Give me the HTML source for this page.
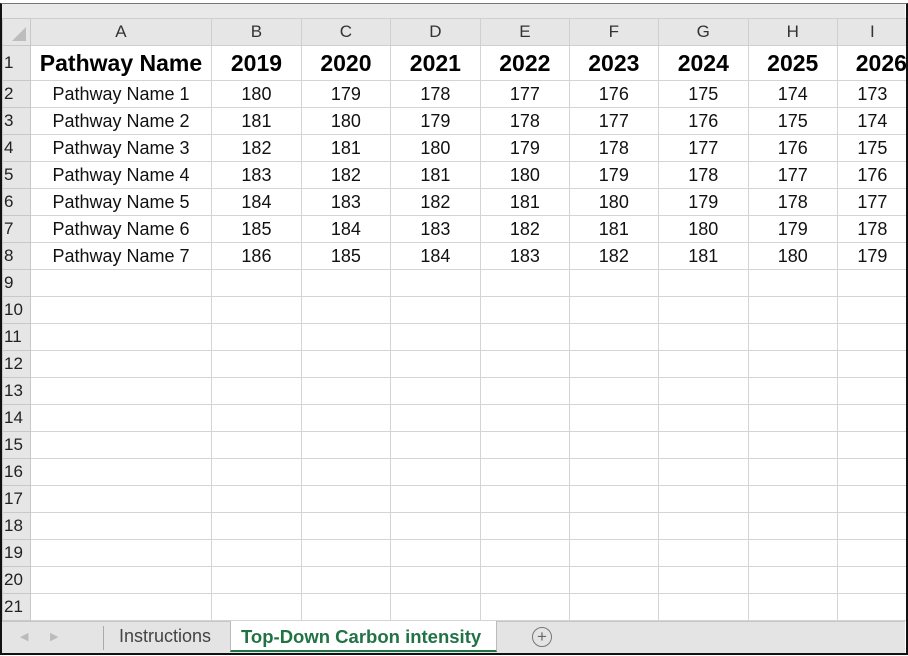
<!DOCTYPE html>
<html><head><style>
body{margin:0;width:908px;height:656px;overflow:hidden;background:#fff;font-family:"Liberation Sans",sans-serif;position:relative}
.frame{position:absolute;left:0;top:3px;width:904px;height:649px;border:2px solid #111;border-top:1px solid #777;box-sizing:content-box}
.top{position:absolute;left:2px;top:4px;width:903px;height:14px;background:#e9e9e9}
table{position:absolute;left:2px;top:18px;border-collapse:collapse;table-layout:fixed}
td{border:1px solid #d4d4d4;padding:0;text-align:center;font-size:18px;color:#111;white-space:nowrap;overflow:hidden;height:26px}
tr.h td{background:#e6e6e6;height:26px;font-size:17px;color:#333;border-color:#cfcfcf}
tr.r1 td{height:34px;font-weight:bold;font-size:23px;color:#000}
tr td.rh{background:#e6e6e6;text-align:left;padding-left:1px;font-size:17px;color:#222;font-weight:normal;border-color:#c8c8c8}
.tabs{position:absolute;left:2px;top:621px;width:903px;height:31px;background:#e4e4e4;border-top:1px solid #c6c6c6}
</style></head><body>
<div class="top"></div>
<table>
<colgroup><col style="width:28px"><col style="width:181px"><col style="width:90px"><col style="width:89px"><col style="width:90px"><col style="width:89px"><col style="width:89px"><col style="width:90px"><col style="width:89px"><col style="width:70px"></colgroup>
<tr class="h"><td class="rh" style="position:relative"><svg width="20" height="20" style="position:absolute;right:2px;bottom:2px"><polygon points="18,4 18,18 4,18" fill="#bdbdbd"/></svg></td><td>A</td><td>B</td><td>C</td><td>D</td><td>E</td><td>F</td><td>G</td><td>H</td><td>I</td></tr>
<tr class="r1"><td class="rh">1</td><td>Pathway Name</td><td>2019</td><td>2020</td><td>2021</td><td>2022</td><td>2023</td><td>2024</td><td>2025</td><td style="text-align:left;padding-left:18px">2026</td></tr>
<tr><td class="rh">2</td><td>Pathway Name 1</td><td>180</td><td>179</td><td>178</td><td>177</td><td>176</td><td>175</td><td>174</td><td>173</td></tr>
<tr><td class="rh">3</td><td>Pathway Name 2</td><td>181</td><td>180</td><td>179</td><td>178</td><td>177</td><td>176</td><td>175</td><td>174</td></tr>
<tr><td class="rh">4</td><td>Pathway Name 3</td><td>182</td><td>181</td><td>180</td><td>179</td><td>178</td><td>177</td><td>176</td><td>175</td></tr>
<tr><td class="rh">5</td><td>Pathway Name 4</td><td>183</td><td>182</td><td>181</td><td>180</td><td>179</td><td>178</td><td>177</td><td>176</td></tr>
<tr><td class="rh">6</td><td>Pathway Name 5</td><td>184</td><td>183</td><td>182</td><td>181</td><td>180</td><td>179</td><td>178</td><td>177</td></tr>
<tr><td class="rh">7</td><td>Pathway Name 6</td><td>185</td><td>184</td><td>183</td><td>182</td><td>181</td><td>180</td><td>179</td><td>178</td></tr>
<tr><td class="rh">8</td><td>Pathway Name 7</td><td>186</td><td>185</td><td>184</td><td>183</td><td>182</td><td>181</td><td>180</td><td>179</td></tr>
<tr><td class="rh">9</td><td></td><td></td><td></td><td></td><td></td><td></td><td></td><td></td><td></td></tr>
<tr><td class="rh">10</td><td></td><td></td><td></td><td></td><td></td><td></td><td></td><td></td><td></td></tr>
<tr><td class="rh">11</td><td></td><td></td><td></td><td></td><td></td><td></td><td></td><td></td><td></td></tr>
<tr><td class="rh">12</td><td></td><td></td><td></td><td></td><td></td><td></td><td></td><td></td><td></td></tr>
<tr><td class="rh">13</td><td></td><td></td><td></td><td></td><td></td><td></td><td></td><td></td><td></td></tr>
<tr><td class="rh">14</td><td></td><td></td><td></td><td></td><td></td><td></td><td></td><td></td><td></td></tr>
<tr><td class="rh">15</td><td></td><td></td><td></td><td></td><td></td><td></td><td></td><td></td><td></td></tr>
<tr><td class="rh">16</td><td></td><td></td><td></td><td></td><td></td><td></td><td></td><td></td><td></td></tr>
<tr><td class="rh">17</td><td></td><td></td><td></td><td></td><td></td><td></td><td></td><td></td><td></td></tr>
<tr><td class="rh">18</td><td></td><td></td><td></td><td></td><td></td><td></td><td></td><td></td><td></td></tr>
<tr><td class="rh">19</td><td></td><td></td><td></td><td></td><td></td><td></td><td></td><td></td><td></td></tr>
<tr><td class="rh">20</td><td></td><td></td><td></td><td></td><td></td><td></td><td></td><td></td><td></td></tr>
<tr><td class="rh">21</td><td></td><td></td><td></td><td></td><td></td><td></td><td></td><td></td><td></td></tr>
</table>
<div class="tabs">
<span style="position:absolute;left:18px;top:8px;color:#bbb;font-size:11px">&#9664;</span>
<span style="position:absolute;left:48px;top:8px;color:#bbb;font-size:11px">&#9654;</span>
<div style="position:absolute;left:101px;top:4px;width:1px;height:24px;background:#aaa"></div>
<div style="position:absolute;left:117px;top:4px;font-size:18px;color:#444;white-space:nowrap">Instructions</div>
<div style="position:absolute;left:228px;top:-1px;width:265px;height:29px;background:#fff;border-left:1px solid #bbb;border-right:1px solid #bbb;border-bottom:2px solid #217346"></div>
<div style="position:absolute;left:239px;top:4px;width:254px;font-size:18.5px;font-weight:bold;color:#217346;white-space:nowrap">Top-Down Carbon intensity</div>
<div style="position:absolute;left:530px;top:5px;width:18px;height:18px;border:1px solid #777;border-radius:50%;text-align:center;line-height:18px;font-size:17px;color:#666">+</div>
</div>
<div class="frame"></div>
</body></html>
